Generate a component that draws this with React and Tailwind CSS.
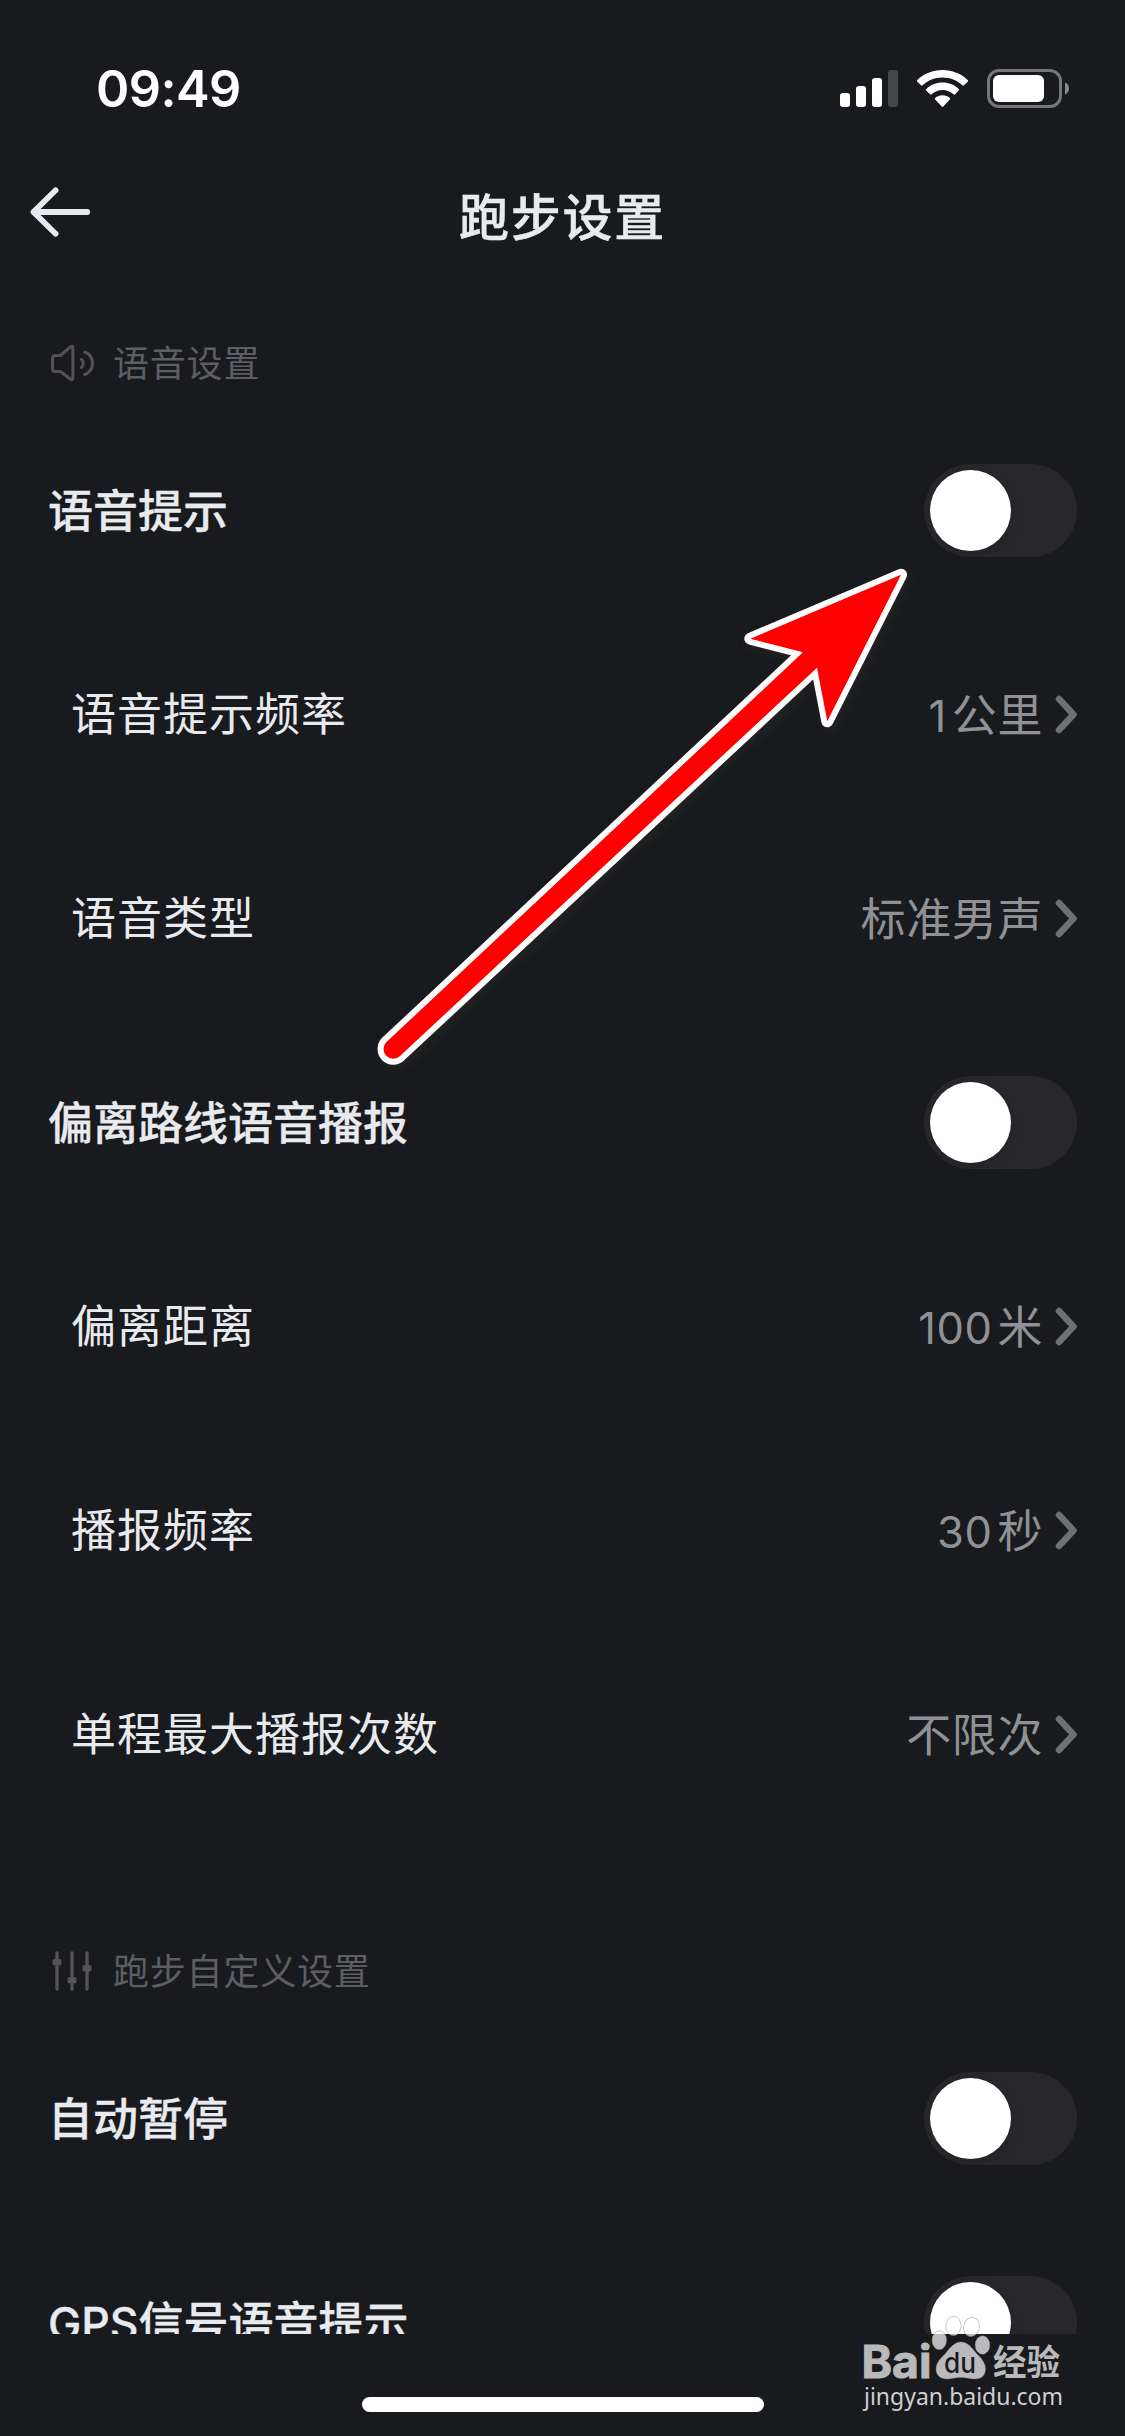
import React, { useState } from "react"

const sections = [
  {
    title: "语音设置",
    icon: "volume",
    rows: [
      { type: "switch", label: "语音提示" },
      { type: "link", label: "语音提示频率", number: "1", value: "公里" },
      { type: "link", label: "语音类型", value: "标准男声" },
      { type: "switch", label: "偏离路线语音播报" },
      { type: "link", label: "偏离距离", number: "100", value: "米" },
      { type: "link", label: "播报频率", number: "30", value: "秒" },
      { type: "link", label: "单程最大播报次数", value: "不限次" }
    ]
  },
  {
    title: "跑步自定义设置",
    icon: "sliders",
    rows: [
      { type: "switch", label: "自动暂停" },
      { type: "switch", prefix: "GPS", label: "信号语音提示" }
    ]
  }
]

const StatusBar = () => (
  <div className="flex h-[147px] shrink-0 items-start justify-between pl-[96px] pr-[55px] pt-[58px]">
    <span className="font-['Inter',sans-serif] text-[50.500px] font-semibold leading-[61px] tracking-[-0.600px] text-white">09:49</span>
    <div className="flex items-center pt-[11px]">
      <svg width="58" height="40" viewBox="0 0 58 40" fill="#fff">
        <rect x="0" y="24" width="10" height="14" rx="3" />
        <rect x="16" y="17" width="10" height="21" rx="3" />
        <rect x="32" y="9" width="10" height="29" rx="3" />
        <rect x="48" y="1" width="10" height="37" rx="3" fill="#464749" />
      </svg>
      <svg className="ml-[19px]" width="51" height="40" viewBox="0 0 51 40" fill="#fff">
        <path d="M25.5 1C35.300 1 44.200 4.700 50.700 11.100C51.200 11.600 51.200 12.200 50.700 12.700L46.900 16.300C46.400 16.800 45.900 16.800 45.400 16.300C40 11.300 33 8.600 25.500 8.600S11 11.300 5.600 16.300C5.100 16.800 4.600 16.800 4.100 16.300L.300 12.700C-.200 12.200-.200 11.600.300 11.100C6.800 4.700 15.700 1 25.500 1Z" />
        <path d="M25.500 13.500C31.800 13.500 37.500 15.900 41.800 19.900C42.300 20.400 42.300 21 41.800 21.500L38 25.300C37.500 25.800 36.900 25.800 36.400 25.300C33.500 22.600 29.700 21 25.500 21S17.500 22.600 14.600 25.300C14.100 25.800 13.500 25.800 13 25.300L9.200 21.500C8.700 21 8.700 20.400 9.200 19.900C13.500 15.900 19.200 13.500 25.500 13.500Z" />
        <path d="M25.500 26.200C28.300 26.200 30.900 27.200 32.800 28.900C33.300 29.300 33.300 30 32.800 30.500L26.300 37.400C25.800 37.900 25.200 37.900 24.700 37.400L18.200 30.500C17.700 30 17.700 29.300 18.200 28.900C20.100 27.200 22.700 26.200 25.500 26.200Z" />
      </svg>
      <svg className="ml-[19px]" width="83" height="40" viewBox="0 0 83 40">
        <rect x="1.500" y="1.500" width="72" height="36" rx="10.500" fill="none" stroke="#757678" strokeWidth="3" />
        <rect x="6" y="6" width="51" height="27" rx="6" fill="#fff" />
        <path d="M78 13.500C83.300 15.500 83.300 23.500 78 25.500Z" fill="#8b8c8e" />
      </svg>
    </div>
  </div>
)

const NavBar = () => (
  <div className="grid h-[140px] shrink-0 grid-cols-[200px_1fr_200px] items-center">
    <svg className="mb-[10px] ml-[30px]" width="62" height="52" viewBox="0 0 62 52" fill="none" stroke="#e7e9ef" strokeWidth="5.800" strokeLinecap="round" strokeLinejoin="round">
      <path d="M25.600 4.300L3.500 26L25.600 47.700" />
      <path d="M4 26H57.200" />
    </svg>
    <h1 className="mb-[7px] text-center text-[50px] font-medium leading-none tracking-[1.700px] text-[#e8eaee] [-webkit-text-stroke:0.5px_#e8eaee]">跑步设置</h1>
  </div>
)

const SectionIcon = ({ name }) => {
  if (name === "volume") {
    return (
      <svg width="45" height="40" viewBox="0 0 45 40" fill="none" stroke="#525257" strokeWidth="3" strokeLinecap="round" strokeLinejoin="round">
        <path d="M5.500 12.500H10.500L20.500 3.800C21.800 2.700 22.900 3.200 22.900 4.800V35.200C22.900 36.800 21.800 37.300 20.500 36.200L10.500 28.500H5.500C3.500 28.500 2.500 27.500 2.500 25.500V15.500C2.500 13.500 3.500 12.500 5.500 12.500Z" />
        <path d="M31.500 16.500C33.800 18.500 33.800 22.500 31.500 24.500" />
        <path d="M34.800 9C45 13 45 27.500 34.800 31.500" />
      </svg>
    )
  }
  return (
    <svg width="45" height="40" viewBox="0 0 45 40" fill="none" stroke="#525257" strokeWidth="3.400" strokeLinecap="round">
      <path d="M7 2V38M22 2V38M37 2V38" />
      <g fill="#525257" stroke="none">
        <rect x="2.500" y="8" width="9" height="6.500" rx="2" />
        <rect x="17.500" y="26" width="9" height="6.500" rx="2" />
        <rect x="32.500" y="14" width="9" height="6.500" rx="2" />
      </g>
    </svg>
  )
}

const Switch = ({ checked, onChange }) => (
  <button
    role="switch"
    aria-checked={checked}
    onClick={onChange}
    className={`flex h-[93px] w-[153px] items-center rounded-full p-[6px] ${checked ? "justify-end bg-[#24c789]" : "justify-start bg-[#28282c]"}`}
  >
    <span className="size-[81px] rounded-full bg-white shadow-[0_6px_16px_rgba(0,0,0,0.1)]" />
  </button>
)

const SwitchRow = ({ row }) => {
  const [checked, setChecked] = useState(false)

  return (
    <div className="flex h-[204px] shrink-0 items-center justify-between pl-[48px] pr-[48px]">
      <span className="mb-[4px] text-[45px] font-medium leading-none text-[#e8eaee] [-webkit-text-stroke:0.3px_#e8eaee]">
        {row.prefix && <span className="font-['Inter',sans-serif] text-[44.500px] leading-[0]">{row.prefix}</span>}
        {row.label}
      </span>
      <Switch checked={checked} onChange={() => setChecked(!checked)} />
    </div>
  )
}

const LinkRow = ({ row }) => (
  <div className="flex h-[204px] shrink-0 items-center justify-between pl-[71px] pr-[46px]">
    <span className="mb-[5px] text-[45px] leading-none tracking-[1px] text-[#e8eaee]">{row.label}</span>
    <div className="flex items-center">
      <span className="mb-[4px] text-[45px] leading-none tracking-[0.600px] text-[#8f9195]">
        {row.number && (
          <span className="mr-[5px] font-['Inter',sans-serif] text-[43.500px] leading-[0] tracking-[0.500px]">{row.number}</span>
        )}
        {row.value}
      </span>
      <svg className="ml-[11px]" width="25" height="40" viewBox="0 0 25 40" fill="none" stroke="#6f7075" strokeWidth="6.500" strokeLinecap="round" strokeLinejoin="round">
        <path d="M5 5L19.500 20.500L5 36" />
      </svg>
    </div>
  </div>
)

const Section = ({ section }) => (
  <section className="mb-[90px]">
    <div className="flex h-[90px] items-center gap-[18px] pl-[50px]">
      <SectionIcon name={section.icon} />
      <h2 className="mb-[5px] text-[36px] leading-none tracking-[0.800px] text-[#5d5e62]">{section.title}</h2>
    </div>
    {section.rows.map(row =>
      row.type === "switch" ? <SwitchRow key={row.label} row={row} /> : <LinkRow key={row.label} row={row} />
    )}
  </section>
)

// Red pointer drawn over the list
const PointerArrow = () => (
  <svg className="pointer-events-none absolute left-[370px] top-[560px] drop-shadow-[3px_4px_4px_rgba(60,60,40,0.25)]" width="550" height="520" viewBox="370 560 550 520">
    <path
      d="M901 574.700L750.300 638.700L803 652.300L386.500 1042A9.700 9.700 0 0 0 400 1056L817 667.700L827.300 721.300Z"
      fill="#f00"
      stroke="#fff"
      strokeWidth="12"
      strokeLinejoin="round"
      paintOrder="stroke"
    />
  </svg>
)

const Watermark = () => (
  <svg className="pointer-events-none absolute left-[855px] top-[2308px]" width="220" height="110" viewBox="855 2308 220 110">
    <g fill="#fff" fillOpacity="0.7" stroke="#777" strokeOpacity="0.4" strokeWidth="1">
      <ellipse cx="939.300" cy="2340.300" rx="7.300" ry="9.500" />
      <ellipse cx="953.500" cy="2326" rx="7.600" ry="9.800" />
      <ellipse cx="971.500" cy="2327" rx="7.900" ry="9.600" transform="rotate(12 971.500 2327)" />
      <ellipse cx="982.500" cy="2345" rx="7.400" ry="9.300" />
      <path d="M961 2342C968 2342 972 2348 977 2354C982 2359 985.500 2363 985.500 2369C985.500 2376 981 2379 975 2379C970 2379 967 2377.500 961 2377.500S952 2379 947 2379C940 2379 936 2375 936 2369C936 2363 940 2359 945 2354C950 2348 954 2342 961 2342Z" />
    </g>
    <g fill="#b9b9b9">
      <text x="861.500" y="2378" textLength="70" lengthAdjust="spacingAndGlyphs" stroke="#b9b9b9" strokeWidth="1" className="font-['Inter',sans-serif] text-[45px] font-bold">Bai</text>
      <text x="993" y="2375" textLength="67" lengthAdjust="spacingAndGlyphs" className="font-['Noto_Sans_CJK_SC',sans-serif] text-[35px] font-bold">经验</text>
    </g>
    <text x="944" y="2373" textLength="32" lengthAdjust="spacingAndGlyphs" fill="#191a1e" className="font-['Inter',sans-serif] text-[28px] font-medium">du</text>
    <text x="864" y="2405" textLength="199" lengthAdjust="spacingAndGlyphs" fill="#d0d0d1" className="font-['Noto_Sans',sans-serif] text-[24px]">jingyan.baidu.com</text>
  </svg>
)

const App = () => {
  return (
    <div className="relative flex h-[2436px] w-[1125px] flex-col overflow-hidden bg-[#191a1e] font-['Noto_Sans_CJK_SC',sans-serif]">
      <StatusBar />
      <NavBar />
      <main className="min-h-0 flex-1 overflow-hidden pt-[31px]">
        {sections.map(section => (
          <Section key={section.title} section={section} />
        ))}
      </main>
      <footer className="flex h-[102px] shrink-0 items-end justify-center pb-[24px]">
        <div className="h-[15px] w-[402px] rounded-full bg-white" />
      </footer>
      <PointerArrow />
      <Watermark />
    </div>
  )
}

export default App
